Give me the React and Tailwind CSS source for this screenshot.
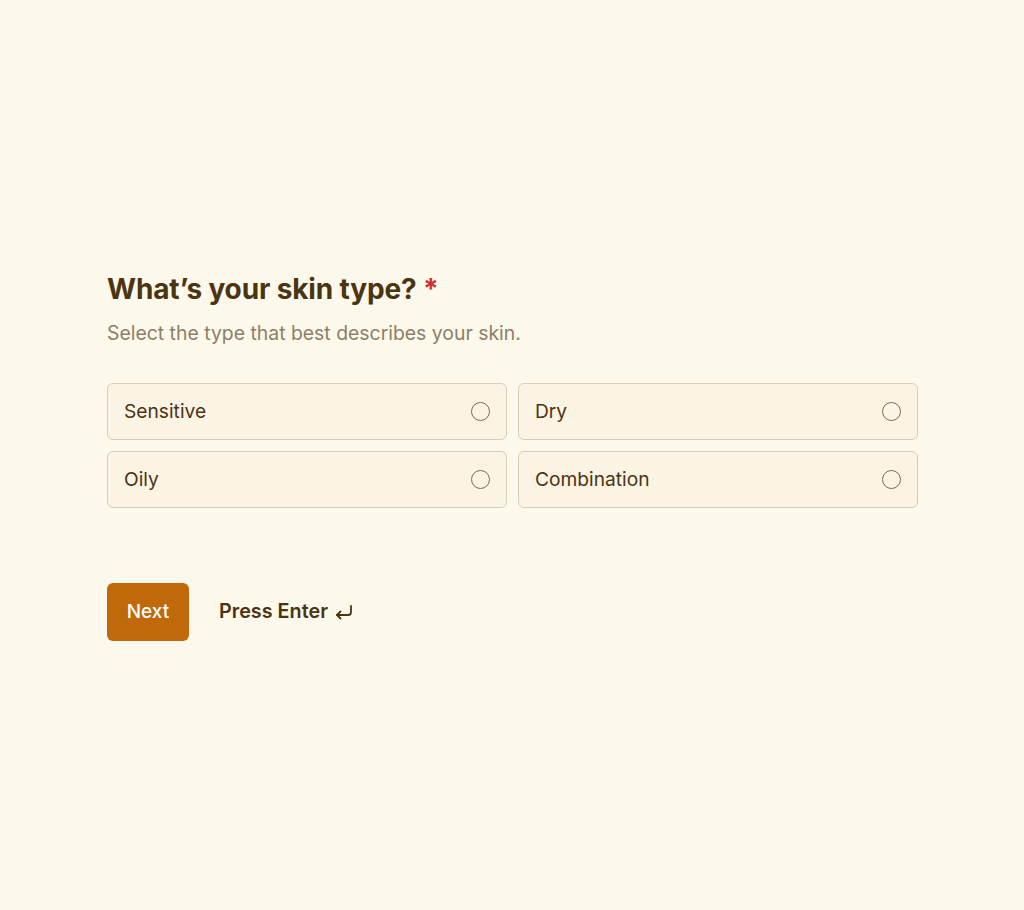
export default function App() {
  const options = ["Sensitive", "Dry", "Oily", "Combination"];
  return (
    <div className="min-h-[910px] w-full bg-[#fdf8ec] flex flex-col" style={{ fontFamily: "Inter, 'Noto Sans', sans-serif" }}>
      <div className="pt-[271px] pl-[107px] w-[918px]">
        <h1 className="text-[28px] leading-[36px] font-bold text-[#4b3410] tracking-[-0.005em]">
          What’s your skin type? <span className="text-[#d0302c]">*</span>
        </h1>
        <p className="mt-[13px] text-[19.4px] leading-[26px] text-[#8d7f66]">Select the type that best describes your skin.</p>
        <div className="mt-[37px] grid grid-cols-2 gap-[11px]">
          {options.map((o) => (
            <div key={o} className="h-[57px] rounded-[6px] border border-[#d8cdb6] bg-[#fbf3e3] flex items-center justify-between pl-[16px] pr-[16px]">
              <span className="text-[19.2px] text-[#4b3410]">{o}</span>
              <span className="w-[19px] h-[19px] rounded-full border-[1.6px] border-[#7d6b4f]" />
            </div>
          ))}
        </div>
        <div className="mt-[75px] flex items-center gap-[30px]">
          <button className="w-[82px] h-[58px] rounded-[6px] bg-[#c0690a] text-white text-[19px] font-medium">Next</button>
          <span className="text-[19.8px] font-semibold text-[#4b3410] flex items-center gap-[7px]">
            Press Enter
            <svg width="18" height="16" viewBox="0 0 18 16" fill="none" stroke="#4b3410" strokeWidth="1.8" strokeLinecap="round" strokeLinejoin="round">
              <path d="M16 2v6a3 3 0 0 1-3 3H2" />
              <path d="M5.5 7.5L2 11l3.5 3.5" />
            </svg>
          </span>
        </div>
      </div>
    </div>
  );
}
